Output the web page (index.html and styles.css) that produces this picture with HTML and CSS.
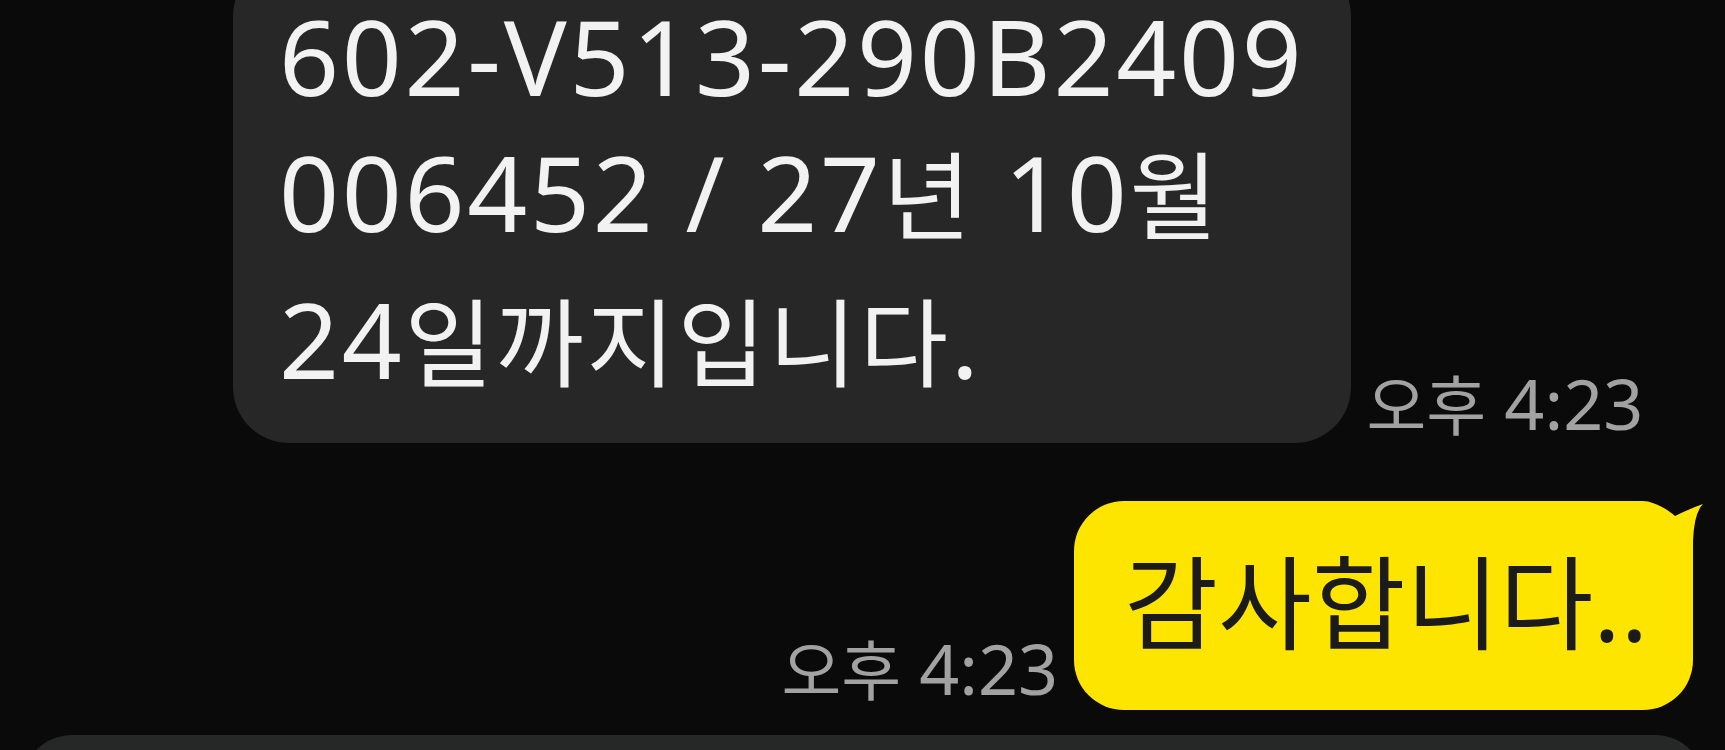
FILE: index.html
```html
<!DOCTYPE html>
<html lang="ko">
<head>
<meta charset="utf-8">
<title>Chat</title>
<link rel="stylesheet" href="styles.css">
</head>
<body>
<div class="chat">
  <div class="row row-in">
    <div class="bubble bubble-in">
      <div class="line line-first">602-V513-290B2409</div>
      <div class="line">006452 / 27<span class="ko">년</span> 10<span class="ko">월</span></div>
      <div class="line line-last">24<span class="ko">일까지입니다</span>.</div>
    </div>
    <span class="time time-in"><span class="ko">오후</span> 4:23</span>
  </div>
  <div class="row row-out">
    <span class="time time-out"><span class="ko">오후</span> 4:23</span>
    <div class="bubble bubble-out">감사합니다..<svg class="tail" width="62" height="60" viewBox="0 0 62 60"><rect x="0" y="0" width="50" height="46" fill="#0a0a0a"/><path d="M0 0 C8 0 22 6 32 15 Q46 8 60 3 Q51 12 50 40 L50 60 L0 60 Z" fill="#fee500"/></svg></div>
  </div>
  <div class="bubble bubble-next"></div>
</div>
</body>
</html>
```
FILE: styles.css
```css
html, body {
  margin: 0;
  padding: 0;
  background: #0a0a0a;
}
body {
  width: 1725px;
  height: 750px;
  overflow: hidden;
  font-family: "Noto Sans", "Noto Sans CJK KR", sans-serif;
}
.chat {
  display: flex;
  flex-direction: column;
}
.row {
  display: flex;
  align-items: flex-end;
}
.row-in {
  padding-left: 233px;
}
.row-out {
  justify-content: flex-end;
  padding-right: 32px;
  margin-top: 58px;
}
.bubble-in {
  background: #272727;
  color: #f2f2f2;
  font-size: 105px;
  letter-spacing: 2.7px;
  line-height: 136px;
  white-space: nowrap;
  border-radius: 56px;
  margin-top: -40px;
  padding: 40px 46px 36px 46px;
}
.bubble-in .ko {
  font-size: 96px;
  line-height: 1;
}
.line-first {
  line-height: 112px;
  margin-bottom: 12px;
}
.line-last {
  margin-top: 11px;
}
.time {
  color: #a2a2a2;
  font-size: 70px;
  line-height: 70px;
  white-space: nowrap;
}
.time .ko {
  font-size: 65px;
  line-height: 1;
}
.time-in {
  margin-left: 16px;
  margin-bottom: 5px;
}
.time-out {
  margin-right: 16px;
  margin-bottom: 7px;
}
.bubble-out {
  position: relative;
  background: #fee500;
  color: #1b1b1b;
  font-size: 102px;
  line-height: 94px;
  white-space: nowrap;
  border-radius: 50px 0 50px 50px;
  padding: 55px 45px 60px 50px;
}
.tail {
  position: absolute;
  top: 0;
  right: -12px;
  display: block;
}
.bubble-next {
  margin: 25px 20px 0 22px;
  height: 120px;
  background: #262828;
  border-radius: 50px;
}
```
